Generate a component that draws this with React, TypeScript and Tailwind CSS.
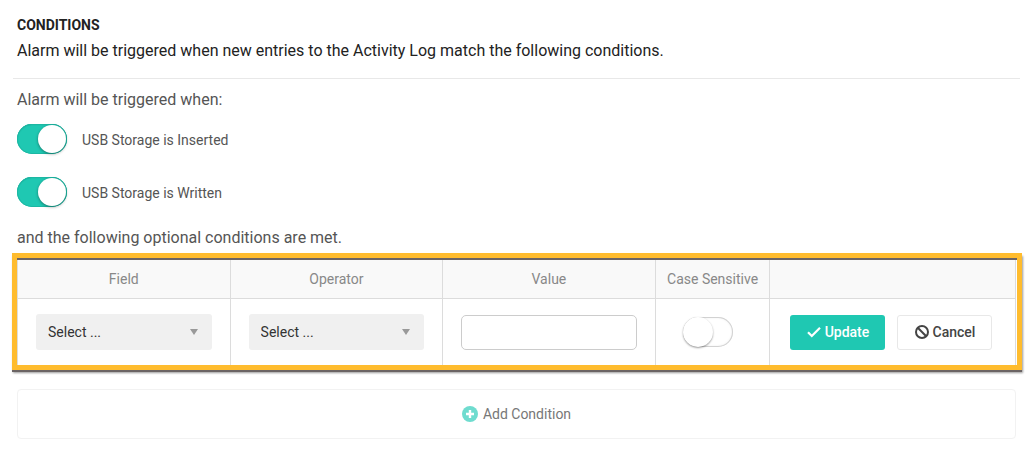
import { useId, useState } from "react";

type ToggleProps = {
  label: string;
  defaultOn?: boolean;
  hideLabel?: boolean;
};

function Toggle({ label, defaultOn = false, hideLabel = false }: ToggleProps) {
  const id = useId();
  const [on, setOn] = useState(defaultOn);
  return (
    <div className="flex items-center gap-[15px]">
      <input
        id={id}
        type="checkbox"
        role="switch"
        checked={on}
        aria-label={hideLabel ? label : undefined}
        onChange={(e) => setOn(e.target.checked)}
        className="flex h-[30px] w-[50px] shrink-0 cursor-pointer appearance-none items-center rounded-full bg-white shadow-[inset_0_0_0_1px_#d2d2d2,inset_0_0_3px_rgba(0,0,0,0.15)] before:size-[30px] before:rounded-full before:bg-white before:shadow-[0_1px_2px_rgba(0,0,0,0.4)] checked:justify-end checked:bg-[#1fc8b2] checked:pr-px checked:shadow-[inset_0_0_0_1px_#1db7a3,inset_0_1px_1px_#19a392] checked:before:size-7 checked:before:shadow-[0_1px_3px_rgba(0,0,0,0.4)]"
      />
      {!hideLabel && (
        <label htmlFor={id} className="pt-0.5 text-sm text-[#555]">
          {label}
        </label>
      )}
    </div>
  );
}

function Dropdown({ label }: { label: string }) {
  return (
    <div className="grid items-center">
      <select
        aria-label={label}
        className="col-start-1 row-start-1 h-9 w-full appearance-none rounded-[3px] bg-[#f0f0f0] pr-8 pl-3 text-sm text-[#333]"
      >
        <option>Select ...</option>
      </select>
      <svg
        viewBox="0 0 8 6"
        className="pointer-events-none col-start-1 row-start-1 mr-[14px] h-[6px] w-2 justify-self-end fill-[#999]"
        aria-hidden="true"
      >
        <path d="M0 0h8L4 6z" />
      </svg>
    </div>
  );
}

const headCell = "border-r border-b border-[#dcdcdc] bg-[#f9f9f9] p-0 text-center font-normal";
const bodyCell = "border-r border-[#dcdcdc] p-0 px-[18px]";

export default function App() {
  return (
    <main className="bg-white pt-[15px] pb-4 font-['Roboto',sans-serif] text-[#555]">
      <header className="mr-[14px] ml-[13px] border-b border-[#e8e8e8] px-1 pb-[15px] text-[#222]">
        <h1 className="text-sm leading-5 font-bold">CONDITIONS</h1>
        <p className="mt-1 text-base leading-6">
          Alarm will be triggered when new entries to the Activity Log match the following conditions.
        </p>
      </header>

      <section className="mr-[18px] ml-[17px]">
        <p className="mt-[9px] text-base leading-6">Alarm will be triggered when:</p>
        <div className="mt-3 flex flex-col gap-[23px]">
          <Toggle label="USB Storage is Inserted" defaultOn />
          <Toggle label="USB Storage is Written" defaultOn />
        </div>
        <p className="mt-[19px] text-base leading-6">and the following optional conditions are met.</p>
      </section>

      <div className="mx-3 mt-[3px] border-5 border-[#ffbc2e] shadow-[0_2px_0_#6b6464,1px_3px_2px_rgba(0,0,0,0.4)]">
        <div className="border-t-2 border-[#6b6464] pr-px">
          <table className="w-full table-fixed border-separate border-spacing-0 border-l border-[#dcdcdc] text-sm">
            <thead>
              <tr className="h-[39px] text-[#888]">
                <th scope="col" className={`${headCell} w-[21.3%]`}>Field</th>
                <th scope="col" className={`${headCell} w-[21.3%]`}>Operator</th>
                <th scope="col" className={`${headCell} w-[21.3%]`}>Value</th>
                <th scope="col" className={`${headCell} w-[11.5%]`}>Case Sensitive</th>
                <td className={headCell} />
              </tr>
            </thead>
            <tbody>
              <tr className="h-[66px]">
                <td className={bodyCell}>
                  <Dropdown label="Field" />
                </td>
                <td className={bodyCell}>
                  <Dropdown label="Operator" />
                </td>
                <td className={bodyCell}>
                  <input
                    type="text"
                    aria-label="Value"
                    className="block h-[35px] w-full rounded-[5px] border border-[#ccc] bg-white px-3 text-[#333]"
                  />
                </td>
                <td className="border-r border-[#dcdcdc] p-0 pl-[27px]">
                  <Toggle label="Case Sensitive" hideLabel />
                </td>
                <td className="border-r border-[#dcdcdc] p-0 pl-5">
                  <div className="flex gap-3 font-medium">
                    <button
                      type="button"
                      className="flex h-[35px] w-[95px] items-center justify-center gap-1 rounded-[3px] bg-[#1fc8b2] text-white"
                    >
                      <svg viewBox="0 0 14 12" className="h-3 w-[14px]" fill="none" stroke="currentColor" strokeWidth="2.2" aria-hidden="true">
                        <path d="M1 6.2 4.8 10 13 1.8" />
                      </svg>
                      Update
                    </button>
                    <button
                      type="button"
                      className="flex h-[35px] w-[95px] items-center justify-center gap-1 rounded-[3px] border border-[#e8e8e8] bg-white text-[#444]"
                    >
                      <svg viewBox="0 0 14 14" className="size-[14px]" fill="none" stroke="currentColor" strokeWidth="2" aria-hidden="true">
                        <circle cx="7" cy="7" r="6" />
                        <path d="m2.8 2.8 8.4 8.4" />
                      </svg>
                      Cancel
                    </button>
                  </div>
                </td>
              </tr>
            </tbody>
          </table>
        </div>
      </div>

      <div className="mt-[19px] mr-[18px] ml-[17px]">
        <button
          type="button"
          className="flex h-[50px] w-full items-center justify-center gap-[5px] rounded-[4px] border border-[#f2f2f2] bg-white text-sm text-[#777]"
        >
          <svg viewBox="0 0 16 16" className="size-4" aria-hidden="true">
            <circle cx="8" cy="8" r="8" className="fill-[#6fdccf]" />
            <path d="M8 4v8M4 8h8" className="stroke-white" strokeWidth="2.4" />
          </svg>
          Add Condition
        </button>
      </div>
    </main>
  );
}
